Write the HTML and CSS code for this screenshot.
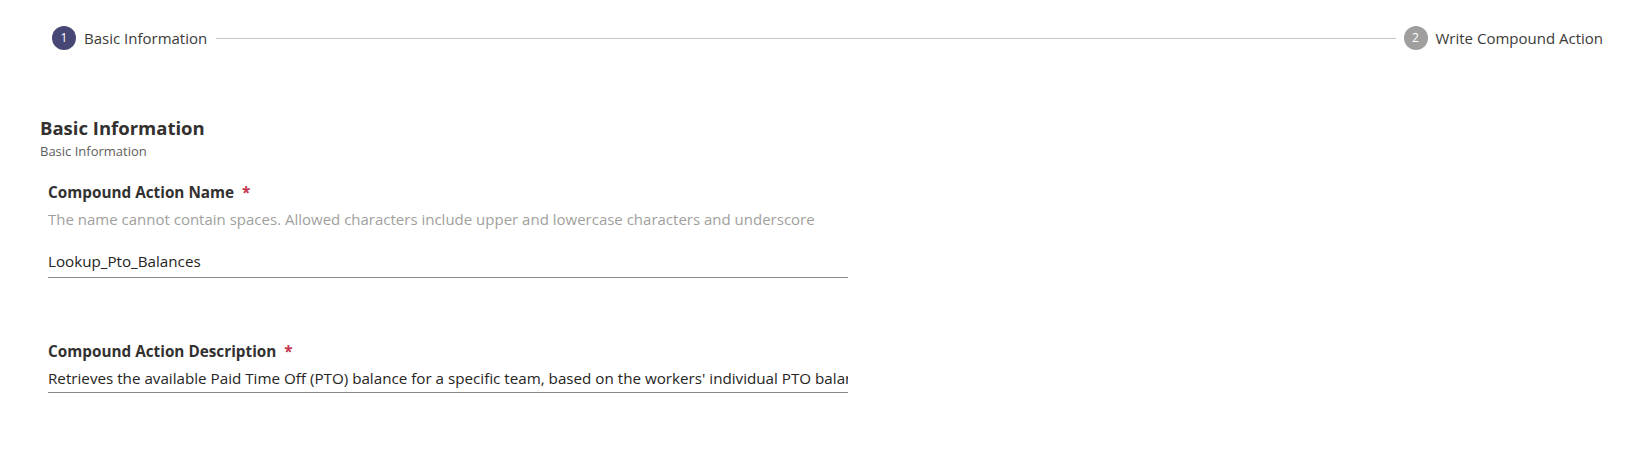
FILE: index.html
```html
<!DOCTYPE html>
<html>
<head>
<meta charset="utf-8">
<link rel="stylesheet" href="styles.css">
</head>
<body>
<div class="stepper">
  <div class="step">
    <span class="dot dot-active">1</span>
    <span class="step-label">Basic Information</span>
  </div>
  <div class="step-line"></div>
  <div class="step">
    <span class="dot dot-idle">2</span>
    <span class="step-label">Write Compound Action</span>
  </div>
</div>

<section class="section">
  <h2 class="section-title">Basic Information</h2>
  <div class="section-sub">Basic Information</div>

  <div class="field field-name">
    <label class="field-label" for="ca-name">Compound Action Name <span class="req">*</span></label>
    <div class="field-help">The name cannot contain spaces. Allowed characters include upper and lowercase characters and underscore</div>
    <input id="ca-name" class="field-input" type="text" value="Lookup_Pto_Balances" readonly>
  </div>

  <div class="field field-desc">
    <label class="field-label" for="ca-desc">Compound Action Description <span class="req">*</span></label>
    <input id="ca-desc" class="field-input" type="text" value="Retrieves the available Paid Time Off (PTO) balance for a specific team, based on the workers' individual PTO balances" readonly>
  </div>
</section>
</body>
</html>
```

FILE: styles.css
```css
* { box-sizing: border-box; }
html, body { margin: 0; padding: 0; background: #ffffff; }
body {
  font-family: "Open Sans", "Noto Sans", sans-serif;
  color: #252423;
  width: 1637px;
  height: 453px;
  overflow: hidden;
}

.stepper {
  display: flex;
  align-items: center;
  padding: 26px 34px 0 52px;
  height: 50px;
}
.step {
  display: flex;
  align-items: center;
}
.dot {
  width: 24px;
  height: 24px;
  border-radius: 50%;
  display: flex;
  align-items: center;
  justify-content: center;
  color: #ffffff;
  font-size: 12px;
  line-height: 1;
}
.dot-active { background: #464775; }
.dot-idle { background: #a19f9d; }
.step-label {
  margin-left: 8px;
  font-size: 15px;
  line-height: 20px;
  color: #3b3a39;
  white-space: nowrap;
}
.step-line {
  flex: 1;
  height: 1px;
  background: #c8c6c4;
  margin: 0 8px 0 9px;
}

.section {
  padding: 66px 0 0 40px;
}
.section-title {
  margin: 0;
  font-size: 18.5px;
  font-weight: 700;
  line-height: 24px;
  color: #323130;
}
.section-sub {
  margin-top: 2px;
  font-size: 13px;
  line-height: 18px;
  color: #605e5c;
}

.field {
  display: flex;
  flex-direction: column;
  margin-left: 8px;
  width: 800px;
}
.field-name { margin-top: 22px; }
.field-desc { margin-top: 63px; }
.field-label {
  display: block;
  font-size: 15.3px;
  font-weight: 700;
  line-height: 20px;
  color: #323130;
}
.req {
  color: #c4314b;
  margin-left: 4px;
}
.field-help {
  font-size: 15px;
  line-height: 22px;
  color: #a19f9d;
  margin-top: 6px;
}
.field-input {
  display: block;
  width: 800px;
  height: 26px;
  margin: 0;
  padding: 0 0 3px 0;
  font-family: inherit;
  font-size: 15.2px;
  line-height: 22px;
  color: #252423;
  background: transparent;
  border: none;
  border-bottom: 1px solid #8a8886;
  border-radius: 0;
  outline: none;
}
.field-name .field-input {
  margin-top: 20px;
  height: 28px;
  padding-bottom: 5px;
}
.field-desc .field-input { margin-top: 6px; }
```
